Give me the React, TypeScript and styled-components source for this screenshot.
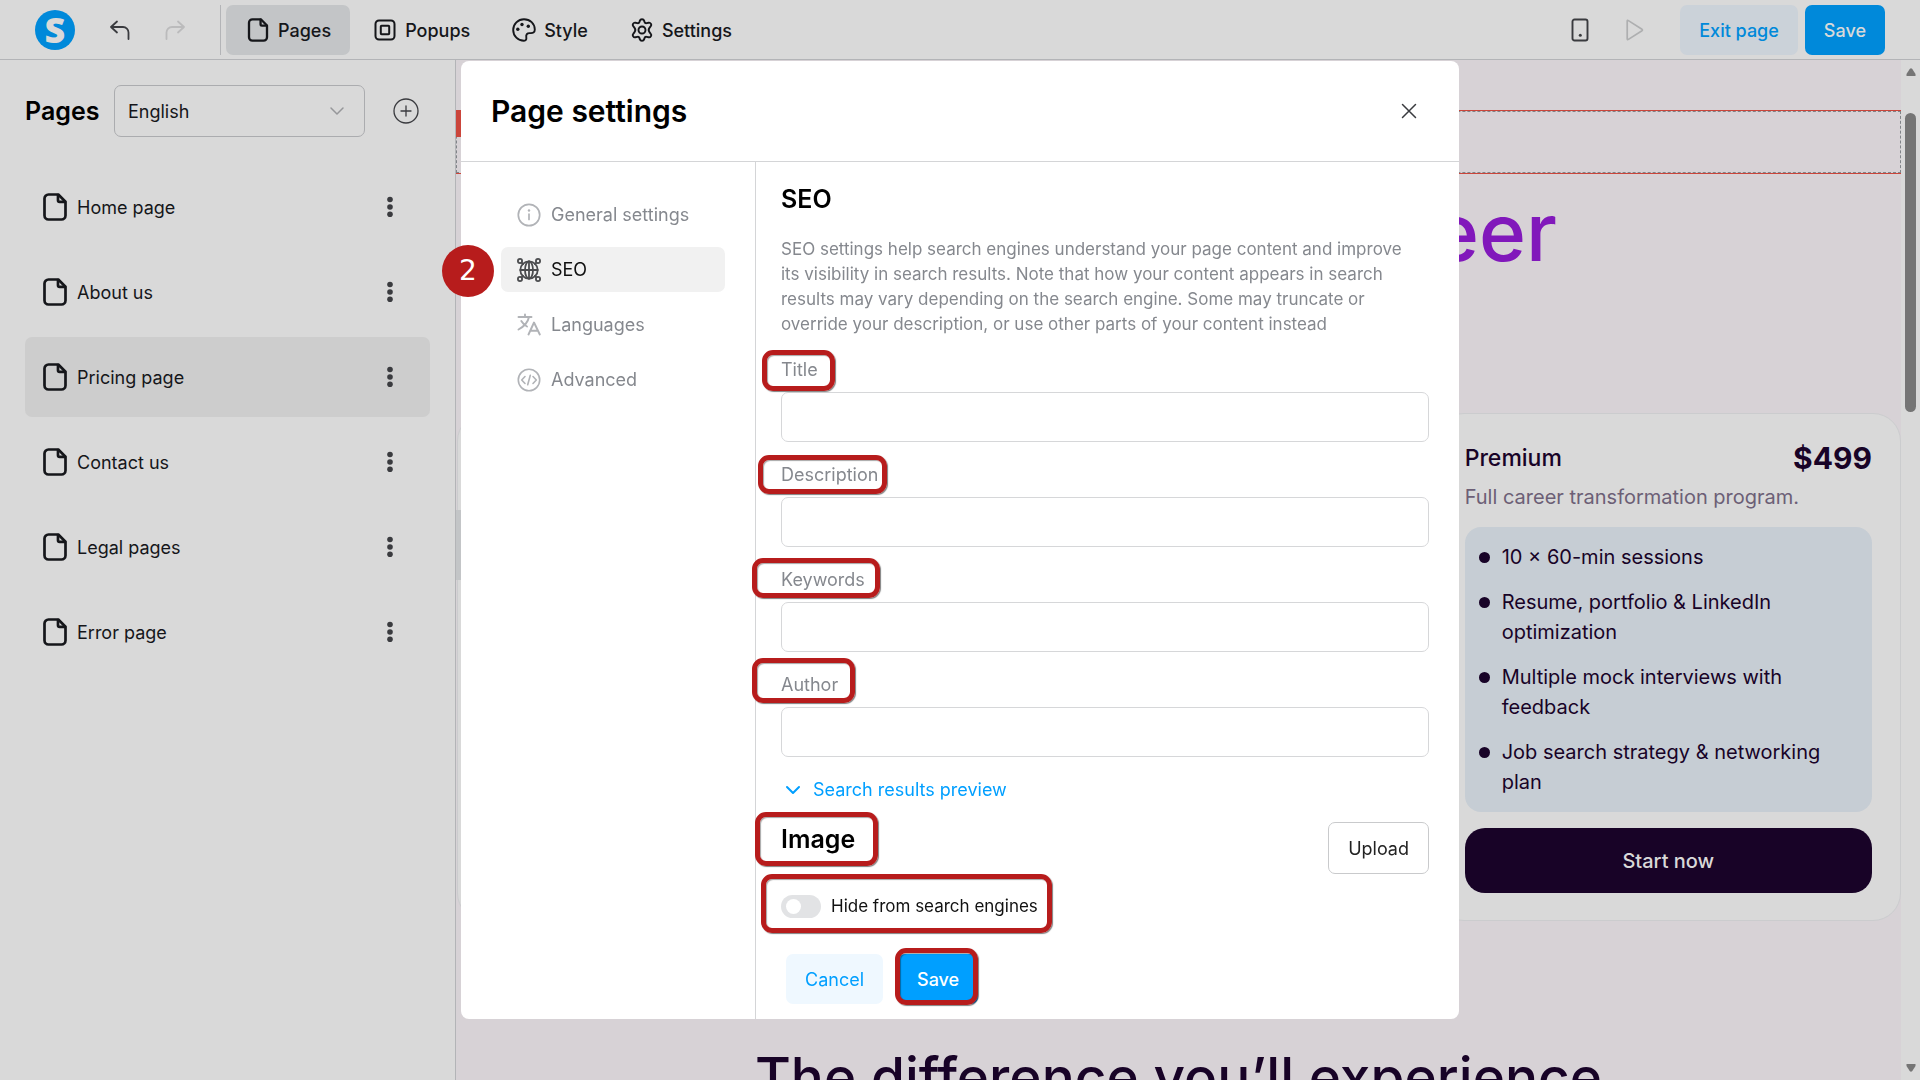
import React from "react";
import styled, { createGlobalStyle } from "styled-components";

const color = {
  surface: "#d9d9d9",
  line: "#b3b4b7",
  ink: "#15161a",
  blueDim: "#0089da",
  blue: "#009fff",
  canvas: "#d7d2d6",
  plum: "#180327",
  red: "#b71c1c",
  muted: "#85888e",
};

const GlobalStyle = createGlobalStyle`
  *, *::before, *::after { box-sizing: border-box; }
  html, body { margin: 0; height: 100%; overflow: hidden; }
  body, button, input, select { font-family: Inter, "Liberation Sans", sans-serif; }
  h1, h2, h3, p, ul { margin: 0; padding: 0; }
  button { border: 0; background: none; padding: 0; color: inherit; cursor: pointer; }
  svg { display: block; flex: none; }
`;

const Shell = styled.div`
  height: 100vh;
  display: flex;
  flex-direction: column;
  background: ${color.surface};
  color: ${color.ink};
  font-size: 18px;
`;

/* ---------- top bar ---------- */

const TopBar = styled.header`
  flex: none;
  display: flex;
  align-items: center;
  justify-content: space-between;
  padding: 5px 35px 4px;
  border-bottom: 1px solid ${color.line};
`;

const BarGroup = styled.div<{ $gap?: number }>`
  display: flex;
  align-items: center;
  gap: ${(p) => p.$gap ?? 0}px;
`;

const Logo = styled.a`
  width: 40px;
  height: 40px;
  border-radius: 50%;
  background: ${color.blueDim};
  color: ${color.surface};
  font: 800 36px/39px "Open Sans", sans-serif;
  text-align: center;
  text-decoration: none;
`;

const History = styled.div`
  display: flex;
  gap: 31px;
  padding: 0 33px;
`;

const IconButton = styled.button<{ $color?: string }>`
  display: flex;
  align-items: center;
  justify-content: center;
  min-width: 24px;
  color: ${(p) => p.$color ?? "#3a3b3f"};
`;

const Tabs = styled.nav`
  display: flex;
  gap: 3px;
  padding-left: 5px;
  border-left: 1px solid ${color.line};
`;

const Tab = styled.button<{ $active?: boolean }>`
  height: 50px;
  display: flex;
  align-items: center;
  gap: 8px;
  padding: 0 19px 0 20px;
  border-radius: 7px;
  font-size: 18px;
  font-weight: 500;
  background: ${(p) => (p.$active ? "#c3c5c7" : "transparent")};
`;

const ActionButton = styled.button<{ $kind: "soft" | "solid"; $dim?: boolean }>`
  height: 50px;
  padding: 0 19px;
  border-radius: 7px;
  font-size: 18px;
  font-weight: ${(p) => (p.$dim || p.$kind === "solid" ? 500 : 400)};
  color: ${(p) =>
    p.$kind === "solid" ? (p.$dim ? color.surface : "#fff") : p.$dim ? color.blueDim : color.blue};
  background: ${(p) =>
    p.$kind === "solid" ? (p.$dim ? color.blueDim : color.blue) : p.$dim ? "#cbd2d9" : "#eff8ff"};
`;

/* ---------- sidebar ---------- */

const Body = styled.div`
  flex: 1;
  min-height: 0;
  display: flex;
`;

const Sidebar = styled.aside`
  flex: none;
  width: 456px;
  padding: 25px 25px 0;
  border-right: 1px solid ${color.line};
`;

const SidebarHead = styled.div`
  display: flex;
  align-items: center;
  height: 52px;
  margin-bottom: 30px;
`;

const SidebarTitle = styled.h2`
  width: 89px;
  font-size: 25px;
  font-weight: 600;
  color: #000;
`;

const SelectBox = styled.div`
  position: relative;
  width: 251px;
  margin-right: 28px;
`;

const Select = styled.select`
  appearance: none;
  width: 100%;
  height: 52px;
  padding: 0 13px;
  border: 1px solid #abacaf;
  border-radius: 7px;
  background: transparent;
  color: ${color.ink};
  font-size: 18px;
`;

const SelectArrow = styled.span`
  position: absolute;
  right: 20px;
  top: 21px;
  pointer-events: none;
  color: #96979a;
`;

const PageList = styled.ul`
  list-style: none;
  display: flex;
  flex-direction: column;
  gap: 5px;
`;

const PageItem = styled.li<{ $active?: boolean }>`
  height: 80px;
  display: flex;
  align-items: center;
  justify-content: space-between;
  padding: 0 28px 0 18px;
  border-radius: 7px;
  background: ${(p) => (p.$active ? "#cdcdcd" : "transparent")};
`;

const PageLink = styled.a`
  display: flex;
  align-items: center;
  gap: 10px;
  color: ${color.ink};
  text-decoration: none;
`;

/* ---------- site canvas ---------- */

const Canvas = styled.main`
  position: relative;
  flex: 1;
  min-width: 0;
  overflow: hidden;
  background: ${color.canvas};
  color: ${color.plum};
`;

const Section = styled.div`
  position: relative;
  height: 64px;
  margin-top: 50px;
  border: solid #cb453b;
  border-width: 1px 0;
`;

const SectionOutline = styled.div`
  height: 100%;
  border: 1px dashed #808488;
`;

const SectionTag = styled.span`
  position: absolute;
  left: 0;
  top: 0;
  width: 60px;
  height: 26px;
  background: #cb453b;
`;

const Headline = styled.h1`
  height: 239px;
  padding: 10px 344px 0 0;
  text-align: right;
  font-size: 80px;
  line-height: 96px;
  font-weight: 500;
  color: #8118bb;
`;

const Plans = styled.div`
  display: grid;
  grid-template-columns: repeat(3, 1fr);
  gap: 24px;
  padding-left: 1px;
`;

const Plan = styled.article`
  min-height: 508px;
  padding: 20px 28px 27px;
  border: 1px solid #cbccce;
  border-radius: 28px;
  background: ${color.surface};
`;

const PlanHead = styled.div`
  display: flex;
  align-items: center;
  justify-content: space-between;
  height: 48px;
`;

const PlanName = styled.h3`
  font-size: 23px;
  font-weight: 500;
`;

const Price = styled.strong`
  font-size: 30px;
  font-weight: 700;
`;

const PlanNote = styled.p`
  padding-bottom: 15px;
  font-size: 20px;
  line-height: 30px;
  color: #6c5f76;
`;

const Features = styled.ul`
  list-style: none;
  display: flex;
  flex-direction: column;
  gap: 15px;
  padding: 15px 14px;
  border-radius: 16px;
  background: #c6cdd4;
`;

const Feature = styled.li`
  display: flex;
  gap: 12px;
  font-size: 20px;
  line-height: 30px;

  &::before {
    content: "";
    flex: none;
    width: 11px;
    height: 11px;
    margin-top: 10px;
    border-radius: 50%;
    background: ${color.plum};
  }
`;

const StartButton = styled.button`
  width: 100%;
  height: 65px;
  margin-top: 16px;
  border-radius: 20px;
  background: ${color.plum};
  color: ${color.surface};
  font-size: 20px;
  font-weight: 500;
`;

const NextTitle = styled.h2`
  margin-top: 120px;
  text-align: center;
  white-space: nowrap;
  font-size: 55px;
  line-height: 72px;
  font-weight: 500;
`;

const PanelHandle = styled.span`
  position: absolute;
  left: 0;
  top: 450px;
  width: 20px;
  height: 70px;
  background: #c3c5c7;
`;

const ScrollTrack = styled.div`
  flex: none;
  width: 19px;
  display: flex;
  flex-direction: column;
  align-items: center;
  justify-content: space-between;
  padding: 8px 0;
  color: #757575;
`;

const ScrollThumb = styled.span`
  width: 11px;
  height: 299px;
  margin: 37px 0 auto;
  border-radius: 6px;
  background: #757575;
`;

/* ---------- dialog ---------- */

const Overlay = styled.div`
  position: fixed;
  inset: 0;
  display: flex;
  align-items: center;
  justify-content: center;
`;

const Dialog = styled.section`
  width: 998px;
  display: flex;
  flex-direction: column;
  border-radius: 8px;
  background: #fff;
  color: #111;
  font-size: 18px;
`;

const DialogHead = styled.header`
  height: 101px;
  display: flex;
  align-items: center;
  justify-content: space-between;
  padding: 0 38px 0 30px;
  border-bottom: 1px solid #d4d5d7;
`;

const DialogTitle = styled.h1`
  font-size: 30px;
  font-weight: 600;
  color: #000;
`;

const DialogBody = styled.div`
  display: flex;
`;

const DialogNav = styled.nav`
  flex: none;
  width: 295px;
  display: flex;
  flex-direction: column;
  gap: 10px;
  padding: 30px 30px 0 40px;
  border-right: 1px solid #d4d5d7;
`;

const NavButton = styled.button<{ $active?: boolean }>`
  position: relative;
  height: 45px;
  display: flex;
  align-items: center;
  gap: 10px;
  padding: 0 16px;
  border-radius: 7px;
  font-size: 18px;
  color: ${(p) => (p.$active ? "#111" : color.muted)};
  background: ${(p) => (p.$active ? "#f1f1f1" : "transparent")};

  svg {
    color: ${(p) => (p.$active ? "#4b4c4f" : "#b1b3b7")};
  }
`;

const StepBadge = styled.span`
  position: absolute;
  left: -59px;
  top: -2px;
  width: 52px;
  height: 52px;
  border-radius: 50%;
  background: ${color.red};
  color: #fff;
  font: 28px/51px "DejaVu Sans", sans-serif;
  text-align: center;
`;

const Form = styled.form`
  flex: 1;
  display: flex;
  flex-direction: column;
  padding: 20px 30px 15px 25px;
`;

const GroupTitle = styled.h2`
  position: relative;
  font-size: 25px;
  line-height: 34px;
  font-weight: 600;
  color: #000;
`;

const Hint = styled.p`
  margin: 21px 0 20px;
  font-size: 17px;
  line-height: 25px;
  color: ${color.muted};
`;

const Field = styled.div`
  display: flex;
  flex-direction: column;
  align-items: flex-start;
  gap: 10px;
  margin-bottom: 20px;
`;

const FieldLabel = styled.label`
  position: relative;
  line-height: 25px;
  color: ${color.muted};
`;

const TextInput = styled.input`
  width: 100%;
  height: 50px;
  padding: 0 14px;
  border: 1px solid #d6d7d9;
  border-radius: 7px;
  background: #fff;
  font-size: 18px;
`;

const PreviewToggle = styled.button.attrs({ type: "button" })`
  align-self: flex-start;
  display: flex;
  align-items: center;
  gap: 12px;
  padding-left: 4px;
  font-size: 18px;
  line-height: 26px;
  color: ${color.blue};
`;

const ImageRow = styled.div`
  display: flex;
  align-items: flex-start;
  justify-content: space-between;
  margin-top: 19px;
`;

const UploadButton = styled.button.attrs({ type: "button" })`
  height: 52px;
  padding: 0 19px;
  border: 1px solid #c9cacc;
  border-radius: 7px;
  font-size: 18px;
  color: #222;
`;

const SwitchRow = styled.label`
  position: relative;
  align-self: flex-start;
  display: flex;
  align-items: center;
  gap: 10px;
  margin-top: 19px;
  font-size: 17px;
  line-height: 26px;
`;

const Switch = styled.input`
  appearance: none;
  position: relative;
  width: 40px;
  height: 23px;
  margin: 0;
  border-radius: 12px;
  background: #e2e3e5;

  &::before {
    content: "";
    position: absolute;
    left: 5px;
    top: 4px;
    width: 15px;
    height: 15px;
    border-radius: 50%;
    background: #fff;
  }
`;

const FormActions = styled.div`
  display: flex;
  gap: 15px;
  margin-top: 35px;
  padding-left: 5px;
`;

const Anchor = styled.div`
  position: relative;
`;

/* Red frame drawn round the control it sits in: top, right, bottom and left overhang. */
const Mark = styled.span<{ $out: [number, number, number, number] }>`
  position: absolute;
  inset: ${(p) => p.$out.map((n) => `${-n}px`).join(" ")};
  border: 5px solid ${color.red};
  border-radius: 11px;
  box-shadow: 1px 1px 1px rgba(0, 0, 0, 0.5), inset 1px 1px 1px rgba(0, 0, 0, 0.35);
  pointer-events: none;
`;

/* ---------- icons ---------- */

const stroke = {
  fill: "none",
  stroke: "currentColor",
  strokeLinecap: "round",
  strokeLinejoin: "round",
} as const;

const FileIcon = ({ h }: { h: number }) => (
  <svg width="24" height={h} viewBox="0 0 24 28" strokeWidth={2.7} {...stroke}>
    <path d="M5.500 1.500h9.800L22.500 8.700V22.500a4 4 0 0 1-4 4h-13a4 4 0 0 1-4-4v-17a4 4 0 0 1 4-4Z" />
    <path d="M15 2v5.200a1.600 1.600 0 0 0 1.600 1.600H22" />
  </svg>
);

const UndoIcon = ({ flip }: { flip?: boolean }) => (
  <svg width="24" height="24" viewBox="0 0 24 24" strokeWidth={1.8} {...stroke}>
    <path
      d={
        flip
          ? "M15 3.500l6 5.500-6 5.500M21 9H9a5.500 5.500 0 0 0-5.500 5.500V21"
          : "M9 3.500L3 9l6 5.500M3 9h12a5.500 5.500 0 0 1 5.500 5.500V21"
      }
    />
  </svg>
);

const PopupsIcon = () => (
  <svg width="24" height="24" viewBox="0 0 24 24" strokeWidth={2} {...stroke}>
    <rect x="2.500" y="2.500" width="19" height="19" rx="3.500" />
    <rect x="7.800" y="7.800" width="8.400" height="8.400" rx="0.800" />
  </svg>
);

const PaletteIcon = () => (
  <svg width="24" height="24" viewBox="0 0 24 24" strokeWidth={1.9} {...stroke}>
    <path d="M12 1.200C6 1.200 1.200 6 1.200 12S6 22.800 12 22.800c2 0 2.600-1.500 2.300-3.200-.5-2.900.8-4.700 3.600-4.500 3 .3 4.900-.5 4.900-3.600C22.800 5.500 18 1.200 12 1.200Z" />
    <g fill="currentColor" stroke="none">
      <circle cx="10" cy="6.500" r="1.700" />
      <circle cx="16.300" cy="8.300" r="1.700" />
      <circle cx="5.800" cy="11.300" r="1.700" />
    </g>
  </svg>
);

const GearIcon = () => (
  <svg width="24" height="24" viewBox="0 0 24 24" strokeWidth={1.9} {...stroke}>
    <path d="M9.900 2.600c.6-1.900 3.600-1.900 4.200 0l.4 1.300c.3.9 1.300 1.400 2.200 1.200l1.900-.4c1.900-.4 3.500 2 2.200 3.500l-1.200 1.500a3.600 3.600 0 0 0 0 4.600l1.200 1.500c1.300 1.500-.3 3.900-2.200 3.500l-1.900-.4c-.9-.2-1.900.3-2.200 1.200l-.4 1.300c-.6 1.900-3.600 1.900-4.200 0l-.4-1.300c-.3-.9-1.300-1.400-2.200-1.200l-1.900.4c-1.900.4-3.500-2-2.200-3.500l1.200-1.500a3.600 3.600 0 0 0 0-4.600L3.200 8.200C1.900 6.700 3.500 4.300 5.400 4.700l1.900.4c.9.2 1.900-.3 2.200-1.200Z" />
    <circle cx="12" cy="12" r="3.500" />
  </svg>
);

const PhoneIcon = () => (
  <svg width="18" height="24" viewBox="0 0 18 24" strokeWidth={1.9} {...stroke}>
    <rect x="1.500" y="1.500" width="15" height="21" rx="2" />
    <circle cx="9.300" cy="17.300" r="1.500" fill="currentColor" stroke="none" />
  </svg>
);

const PlayIcon = () => (
  <svg width="18" height="22" viewBox="0 0 18 22" strokeWidth={1.7} {...stroke}>
    <path d="M1.200 2.200v17.600q0 1.400 1.200.6L16 11.700q.9-.7 0-1.400L2.400 1.600q-1.200-.8-1.200.6Z" />
  </svg>
);

const ChevronIcon = ({ width }: { width: number }) => (
  <svg width="16" height="10" viewBox="0 0 16 10" strokeWidth={width} {...stroke}>
    <path d="M2 2l6 6 6-6" />
  </svg>
);

const PlusCircleIcon = () => (
  <svg width="26" height="26" viewBox="0 0 26 26" strokeWidth={1.3} {...stroke}>
    <circle cx="13" cy="13" r="12" />
    <path d="M13 8v10M8 13h10" />
  </svg>
);

const DotsIcon = () => (
  <svg width="24" height="22" viewBox="0 0 24 22" fill="currentColor">
    <circle cx="12" cy="3.500" r="2.800" />
    <circle cx="12" cy="11" r="2.800" />
    <circle cx="12" cy="18.200" r="2.800" />
  </svg>
);

const CloseIcon = () => (
  <svg width="16" height="16" viewBox="0 0 16 16" strokeWidth={1.5} {...stroke}>
    <path d="M1.500 1.500l13 13M14.500 1.500l-13 13" />
  </svg>
);

const InfoIcon = () => (
  <svg width="24" height="24" viewBox="0 0 24 24" strokeWidth={1.7} {...stroke}>
    <circle cx="12" cy="12" r="10.700" />
    <path d="M12 11v5.500" />
    <circle cx="12" cy="7.500" r="1.200" fill="currentColor" stroke="none" />
  </svg>
);

const GlobeIcon = () => (
  <svg width="24" height="24" viewBox="0 0 24 24" strokeWidth={1.8} {...stroke}>
    <circle cx="12" cy="12" r="8.700" />
    <ellipse cx="12" cy="12" rx="4" ry="8.700" />
    <path d="M12 3.300v17.400M3.300 12h17.400" />
    <circle cx="3" cy="3" r="2.100" />
    <circle cx="21" cy="3" r="2.100" />
    <circle cx="3" cy="21" r="2.100" />
    <circle cx="21" cy="21" r="2.100" />
    <path d="M4.600 4.600l1.500 1.500M19.400 4.600l-1.500 1.500M4.600 19.400l1.500-1.500M19.400 19.400l-1.500-1.500" />
  </svg>
);

const LanguagesIcon = () => (
  <svg width="24" height="24" viewBox="0 0 24 24" strokeWidth={1.9} {...stroke}>
    <path d="M1.500 4h13M8 1.500V4M12 4C11 9 7 13.500 1.500 16.500M4.300 8c1.500 2.500 3.700 4.500 5.700 5.500" />
    <path d="M11.500 21.500L17 9.500l5.800 12M13.500 17.800h7.500" />
  </svg>
);

const CodeIcon = () => (
  <svg width="24" height="24" viewBox="0 0 24 24" strokeWidth={1.6} {...stroke}>
    <circle cx="12" cy="12" r="10.700" />
    <path d="M8 8.500L4.700 12 8 15.500M16 8.500l3.300 3.500-3.300 3.500M13.300 7.300l-2.600 9.400" />
  </svg>
);

const ScrollArrow = ({ down }: { down?: boolean }) => (
  <svg width="10" height="8" viewBox="0 0 10 8" fill="currentColor">
    <path d={down ? "M.5 0h9v2L6.300 7q-1.300 1.500-2.600 0L.5 2Z" : "M.5 8h9V6L6.300 1Q5-.5 3.700 1L.5 6Z"} />
  </svg>
);

/* ---------- data ---------- */

const pages = ["Home page", "About us", "Pricing page", "Contact us", "Legal pages", "Error page"];

const features = [
  "10 × 60-min sessions",
  "Resume, portfolio & LinkedIn optimization",
  "Multiple mock interviews with feedback",
  "Job search strategy & networking plan",
];

const fields: { name: string; out: [number, number, number, number] }[] = [
  { name: "Title", out: [7, 17, 9, 19] },
  { name: "Description", out: [7, 9, 7, 23] },
  { name: "Keywords", out: [9, 15, 6, 29] },
  { name: "Author", out: [14, 17, 6, 29] },
];

export default function App() {
  return (
    <>
      <GlobalStyle />
      <Shell>
        <TopBar>
          <BarGroup>
            <Logo href="#" aria-label="Dashboard">S</Logo>
            <History>
              <IconButton aria-label="Undo"><UndoIcon /></IconButton>
              <IconButton aria-label="Redo" $color="#bbbbbc"><UndoIcon flip /></IconButton>
            </History>
            <Tabs>
              <Tab $active><FileIcon h={24} />Pages</Tab>
              <Tab><PopupsIcon />Popups</Tab>
              <Tab><PaletteIcon />Style</Tab>
              <Tab><GearIcon />Settings</Tab>
            </Tabs>
          </BarGroup>
          <BarGroup $gap={31}>
            <IconButton aria-label="Mobile view"><PhoneIcon /></IconButton>
            <BarGroup $gap={33}>
              <IconButton aria-label="Preview" $color="#aeafb0"><PlayIcon /></IconButton>
              <BarGroup $gap={7}>
                <ActionButton $kind="soft" $dim>Exit page</ActionButton>
                <ActionButton $kind="solid" $dim>Save</ActionButton>
              </BarGroup>
            </BarGroup>
          </BarGroup>
        </TopBar>

        <Body>
          <Sidebar>
            <SidebarHead>
              <SidebarTitle>Pages</SidebarTitle>
              <SelectBox>
                <Select aria-label="Language" defaultValue="English">
                  <option>English</option>
                </Select>
                <SelectArrow><ChevronIcon width={1.5} /></SelectArrow>
              </SelectBox>
              <IconButton aria-label="Add page"><PlusCircleIcon /></IconButton>
            </SidebarHead>
            <PageList>
              {pages.map((name) => (
                <PageItem key={name} $active={name === "Pricing page"}>
                  <PageLink href="#"><FileIcon h={28} />{name}</PageLink>
                  <IconButton aria-label={`${name} options`}><DotsIcon /></IconButton>
                </PageItem>
              ))}
            </PageList>
          </Sidebar>

          <Canvas>
            <Section>
              <SectionOutline />
              <SectionTag />
            </Section>
            <Headline>career</Headline>
            <Plans>
              <Plan />
              <Plan />
              <Plan>
                <PlanHead>
                  <PlanName>Premium</PlanName>
                  <Price>$499</Price>
                </PlanHead>
                <PlanNote>Full career transformation program.</PlanNote>
                <Features>
                  {features.map((text) => (
                    <Feature key={text}>{text}</Feature>
                  ))}
                </Features>
                <StartButton>Start now</StartButton>
              </Plan>
            </Plans>
            <NextTitle>The difference you’ll experience</NextTitle>
            <PanelHandle />
          </Canvas>

          <ScrollTrack>
            <ScrollArrow />
            <ScrollThumb />
            <ScrollArrow down />
          </ScrollTrack>
        </Body>
      </Shell>

      <Overlay>
        <Dialog role="dialog" aria-labelledby="dialog-title">
          <DialogHead>
            <DialogTitle id="dialog-title">Page settings</DialogTitle>
            <IconButton aria-label="Close"><CloseIcon /></IconButton>
          </DialogHead>
          <DialogBody>
            <DialogNav>
              <NavButton><InfoIcon />General settings</NavButton>
              <NavButton $active>
                <GlobeIcon />SEO
                <StepBadge>2</StepBadge>
              </NavButton>
              <NavButton><LanguagesIcon />Languages</NavButton>
              <NavButton><CodeIcon />Advanced</NavButton>
            </DialogNav>
            <Form>
              <GroupTitle>SEO</GroupTitle>
              <Hint>
                SEO settings help search engines understand your page content and improve
                <br />
                its visibility in search results. Note that how your content appears in search
                <br />
                results may vary depending on the search engine. Some may truncate or
                <br />
                override your description, or use other parts of your content instead
              </Hint>
              {fields.map(({ name, out }) => (
                <Field key={name}>
                  <FieldLabel htmlFor={`seo-${name}`}>
                    {name}
                    <Mark $out={out} />
                  </FieldLabel>
                  <TextInput id={`seo-${name}`} type="text" />
                </Field>
              ))}
              <PreviewToggle><ChevronIcon width={2} />Search results preview</PreviewToggle>
              <ImageRow>
                <GroupTitle>
                  Image
                  <Mark $out={[10, 23, 10, 26]} />
                </GroupTitle>
                <UploadButton>Upload</UploadButton>
              </ImageRow>
              <SwitchRow>
                <Switch type="checkbox" role="switch" />
                Hide from search engines
                <Mark $out={[19, 14, 14, 20]} />
              </SwitchRow>
              <FormActions>
                <ActionButton type="button" $kind="soft">Cancel</ActionButton>
                <Anchor>
                  <ActionButton type="button" $kind="solid">Save</ActionButton>
                  <Mark $out={[6, 0, 1, 3]} />
                </Anchor>
              </FormActions>
            </Form>
          </DialogBody>
        </Dialog>
      </Overlay>
    </>
  );
}
